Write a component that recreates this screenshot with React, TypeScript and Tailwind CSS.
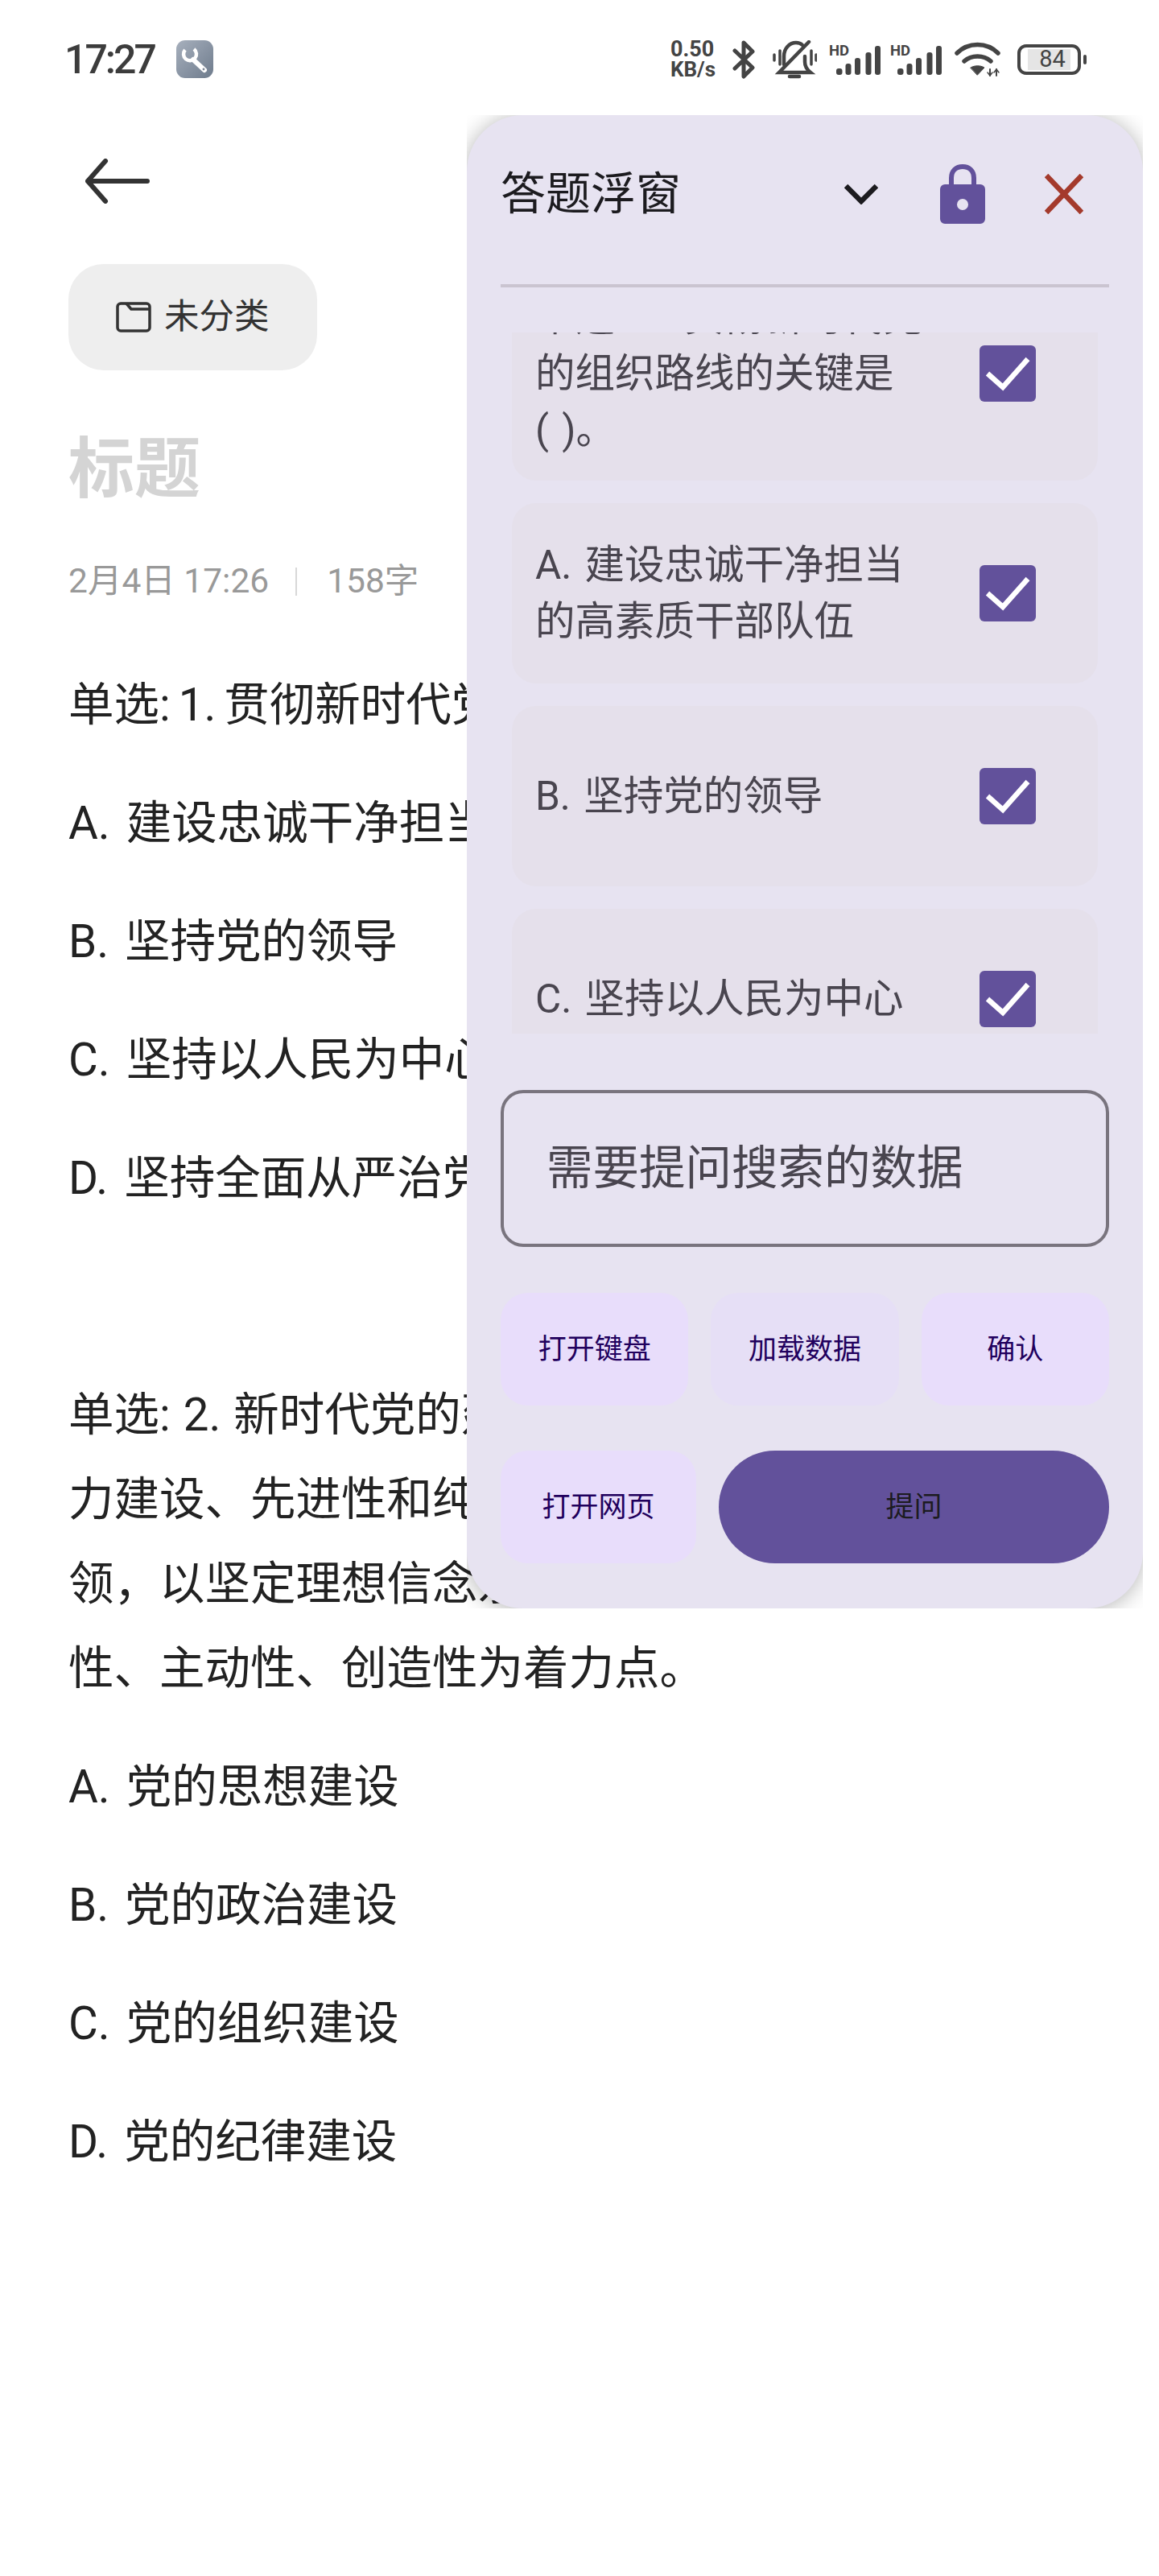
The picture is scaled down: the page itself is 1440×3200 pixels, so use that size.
const FONT = "font-['Roboto','Noto_Sans_CJK_SC',sans-serif]";

const options = [
  ['单选: 1. 贯彻新时代党', '的组织路线的关键是', '( )。'],
  ['A. 建设忠诚干净担当', '的高素质干部队伍'],
  ['B. 坚持党的领导'],
  ['C. 坚持以人民为中心'],
];

const noteParagraphs = [
  ['单选: 1. 贯彻新时代党的组织路线的关键是( )。'],
  ['A. 建设忠诚干净担当的高素质干部队伍'],
  ['B. 坚持党的领导'],
  ['C. 坚持以人民为中心'],
  ['D. 坚持全面从严治党'],
  ['\u00a0'],
  [
    '单选: 2. 新时代党的建设要以加强党的长期执政能',
    '力建设、先进性和纯洁性建设为主线，以党的政治',
    '领，以坚定理想信念宗旨为根基，以调动全党积极',
    '性、主动性、创造性为着力点。',
  ],
  ['A. 党的思想建设'],
  ['B. 党的政治建设'],
  ['C. 党的组织建设'],
  ['D. 党的纪律建设'],
];

const wordSpacing = (line: string) => {
  if (line.startsWith('单选: 1')) return '[word-spacing:-4px]';
  if (line.startsWith('单选')) return '[word-spacing:2px]';
  return '[word-spacing:6px]';
};

const SignalIcon = () => (
  <svg width="64" height="40" viewBox="0 0 64 40" className="overflow-visible text-[#444444]">
    <text x="0" y="15" fontSize="18.5" fontWeight="700" fontFamily="Roboto, sans-serif" fill="currentColor">HD</text>
    <g fill="currentColor">
      <rect x="9" y="31" width="7.5" height="8" rx="3" />
      <rect x="20.5" y="25" width="7" height="14" rx="3" />
      <rect x="32" y="18" width="7" height="21" rx="3" />
      <rect x="45.5" y="11" width="7" height="28" rx="3" />
      <rect x="57" y="3" width="7" height="36" rx="3" />
    </g>
  </svg>
);

const StatusBar = () => (
  <div className="flex h-[147px] items-center justify-between pl-[80px] pr-[90px]">
    <div className="flex items-center gap-[27px]">
      <span className="text-[50px] font-medium leading-none tracking-[-3px] text-[#3c3c3c]">17:27</span>
      <div className="flex h-[47px] w-[46px] items-center justify-center rounded-[11px] bg-gradient-to-br from-[#a7b0bd] to-[#6f7c8d]">
        <svg width="46" height="47" viewBox="0 0 46 47" fill="none">
          <path d="M11 12A8 8 0 1 0 22 11" stroke="#fff" strokeWidth="4.5" />
          <path d="M21 24L35 37" stroke="#fff" strokeWidth="6" strokeLinecap="round" />
          <circle cx="34" cy="36" r="1.4" fill="#7d8897" />
        </svg>
      </div>
    </div>
    <div className="flex items-center">
      <div className="flex w-[62px] flex-col text-[#444444]">
        <span className="text-[27px] font-bold leading-[26px]">0.50</span>
        <span className="text-[26px] font-bold leading-[25px]">KB/s</span>
      </div>
      <svg width="28" height="50" viewBox="0 0 28 50" fill="none" className="ml-[15px]" stroke="#444444" strokeWidth="5" strokeLinejoin="round" strokeLinecap="round">
        <path d="M3 14L25 35L14 46V4L25 15L3 36" />
      </svg>
      <svg width="55" height="48" viewBox="0 0 55 48" fill="none" className="ml-[22px]" stroke="#444444" strokeWidth="4.5" strokeLinecap="round">
        <path d="M45 2L8 40H47C42 36 40 32 40 27V20" />
        <path d="M14 30V20C14 10 21 3 29 3C32 3 35 4 37 6" />
        <path d="M21 45H33" strokeWidth="4.5" />
        <path d="M2 18V25M9 13V30M48 13V30M54 18V25" strokeWidth="3.5" />
      </svg>
      <div className="ml-[15px] flex"><SignalIcon /></div>
      <div className="ml-[12px] flex"><SignalIcon /></div>
      <svg width="57" height="43" viewBox="0 0 57 43" fill="none" className="ml-[16px]" stroke="#444444" strokeWidth="5.5" strokeLinecap="round">
        <path d="M3 14C17 0 40 0 54 14" />
        <path d="M12 24C21 16 36 16 45 24" />
        <path d="M20 32C25 29 32 29 37 32L28.5 41Z" fill="#444444" strokeWidth="1" strokeLinejoin="round" />
        <path d="M44 34V42M52 34V42" strokeWidth="2" stroke="#444444" />
        <path d="M41 38L44 42L47 38M49 38L52 34L55 38" strokeWidth="1.5" />
      </svg>
      <div className="ml-[21px] flex items-center">
        <div className="flex h-[38px] w-[79px] items-center justify-center rounded-[11px] border-[4px] border-[#444444]">
          <div className="flex h-[26px] w-[53px] items-center justify-center bg-[#e5e5e5] pl-[8px] text-[29px] leading-none text-[#444444]">84</div>
        </div>
        <div className="ml-[3px] h-[12px] w-[4px] rounded-full bg-[#444444]" />
      </div>
    </div>
  </div>
);

const Note = () => (
  <div className="pl-[85px]">
    <svg width="80" height="56" viewBox="0 0 80 56" fill="none" className="ml-[21px] mt-[50px] block" stroke="#333333" strokeWidth="6" strokeLinecap="round" strokeLinejoin="round">
      <path d="M77 28H3M25 3L3 28L25 53" />
    </svg>
    <div className="mt-[75px] flex h-[132px] w-[309px] items-center gap-[16px] rounded-[44px] bg-[#eeeeee] pl-[59px]">
      <svg width="44" height="38" viewBox="0 0 44 38" fill="none" stroke="#333333" strokeWidth="3.5" strokeLinejoin="round">
        <path d="M6 2H38A4 4 0 0 1 42 6V32A4 4 0 0 1 38 36H6A4 4 0 0 1 2 32V6A4 4 0 0 1 6 2Z" />
        <path d="M13 2L19 9H42" />
      </svg>
      <span className="text-[43.5px] leading-none text-[#333333]">未分类</span>
    </div>
    <div className="mt-[73px] h-[100px] text-[82px] font-bold leading-[100px] text-[#d4d4d4]">标题</div>
    <div className="mt-[64px] flex h-[50px] items-center text-[42.5px] leading-[50px] text-[#999999]">
      <span>2月4日 17:26</span>
      <span className="ml-[33px] h-[35px] w-[2px] bg-[#d8d8d8]" />
      <span className="ml-[37px]">158字</span>
    </div>
    <div className="mt-[77px] flex flex-col gap-[42px]">
      {noteParagraphs.map((lines, i) => (
        <p key={i} className={`text-[56.5px] leading-[105px] text-[#222222] ${wordSpacing(lines[0])}`}>
          {lines.map((line) => (
            <span key={line} className="block whitespace-nowrap">{line}</span>
          ))}
        </p>
      ))}
    </div>
  </div>
);

const OptionRow = ({ lines }: { lines: string[] }) => (
  <div className="flex min-h-[224px] shrink-0 items-center justify-between rounded-[30px] bg-[#e5e0eb] py-[28px] pl-[29px] pr-[77px]">
    <div className="text-[49.5px] leading-[70px] text-[#49454f] [word-spacing:4px]">
      {lines.map((line) => (
        <span key={line} className="block whitespace-nowrap">{line}</span>
      ))}
    </div>
    <div className="flex h-[70px] w-[70px] items-center justify-center rounded-[6px] bg-[#62519b]">
      <svg width="70" height="70" viewBox="0 0 70 70" fill="none" stroke="#ffffff" strokeWidth="6.5">
        <path d="M10 35L29 52L60 17" />
      </svg>
    </div>
  </div>
);

const ActionButton = ({ label, className }: { label: string; className: string }) => (
  <button className={`flex h-[140px] items-center justify-center rounded-[34px] pt-[3px] text-[35px] text-[#21005d] ${className}`}>
    {label}
  </button>
);

const FloatingPanel = () => (
  <div className="absolute left-[580px] top-[143px] h-[1855px] w-[840px] overflow-hidden">
    <div className="flex h-full flex-col rounded-[70px] bg-[#e7e3f1] px-[42px] shadow-[0_2px_28px_rgba(0,0,0,0.3)]">
      <div className="flex h-[196px] shrink-0 items-center">
        <span className="flex-1 text-[56px] leading-none text-[#1c1b1f]">答题浮窗</span>
        <div className="flex items-center">
          <div className="flex w-[126px] justify-center">
            <svg width="42" height="26" viewBox="0 0 42 26" fill="none" stroke="#1c1b1f" strokeWidth="6.5">
              <path d="M2 3L21 22L40 3" />
            </svg>
          </div>
          <div className="flex w-[126px] justify-center">
            <svg width="56" height="74" viewBox="0 0 56 74" fill="none">
              <path d="M14 28V17C14 8 20 3 28 3C36 3 42 8 42 17V28" stroke="#62519b" strokeWidth="6" />
              <path fillRule="evenodd" clipRule="evenodd" fill="#62519b" d="M6 25H50A6 6 0 0 1 56 31V68A6 6 0 0 1 50 74H6A6 6 0 0 1 0 68V31A6 6 0 0 1 6 25ZM28 43A7 7 0 1 0 28 57A7 7 0 1 0 28 43Z" />
            </svg>
          </div>
          <div className="-mr-[7px] flex w-[126px] justify-center">
            <svg width="48" height="50" viewBox="0 0 48 50" fill="none" stroke="#a43a2c" strokeWidth="6.5">
              <path d="M2 2L46 48M46 2L2 48" />
            </svg>
          </div>
        </div>
      </div>
      <div className="mt-[14px] h-[4px] shrink-0 bg-[#cac4d0]" />
      <div className="mt-[56px] flex h-[871px] shrink-0 flex-col overflow-hidden px-[14px]">
        <div className="-mt-[82px] flex flex-col gap-[28px]">
          {options.map((lines) => (
            <OptionRow key={lines[0]} lines={lines} />
          ))}
        </div>
      </div>
      <div className="mt-[70px] flex h-[195px] shrink-0 items-center rounded-[28px] border-[4px] border-[#79747e] pl-[53px] text-[57.5px] leading-none text-[#49454f]">
        需要提问搜索的数据
      </div>
      <div className="mt-[57px] grid shrink-0 grid-cols-3 gap-[28px]">
        <ActionButton label="打开键盘" className="bg-[#e8ddfb]" />
        <ActionButton label="加载数据" className="bg-[#e6dff6]" />
        <ActionButton label="确认" className="bg-[#e8ddfb]" />
      </div>
      <div className="mt-[56px] flex shrink-0 gap-[28px]">
        <ActionButton label="打开网页" className="w-[243px] bg-[#e8ddfb]" />
        <button className="flex h-[140px] flex-1 items-center justify-center rounded-[70px] bg-[#62519b] pt-[3px] text-[35px] text-[#1c1b1f]">
          提问
        </button>
      </div>
    </div>
  </div>
);

export default function App() {
  return (
    <div className={`relative h-[3200px] w-[1440px] overflow-hidden bg-white ${FONT}`}>
      <StatusBar />
      <Note />
      <FloatingPanel />
    </div>
  );
}
